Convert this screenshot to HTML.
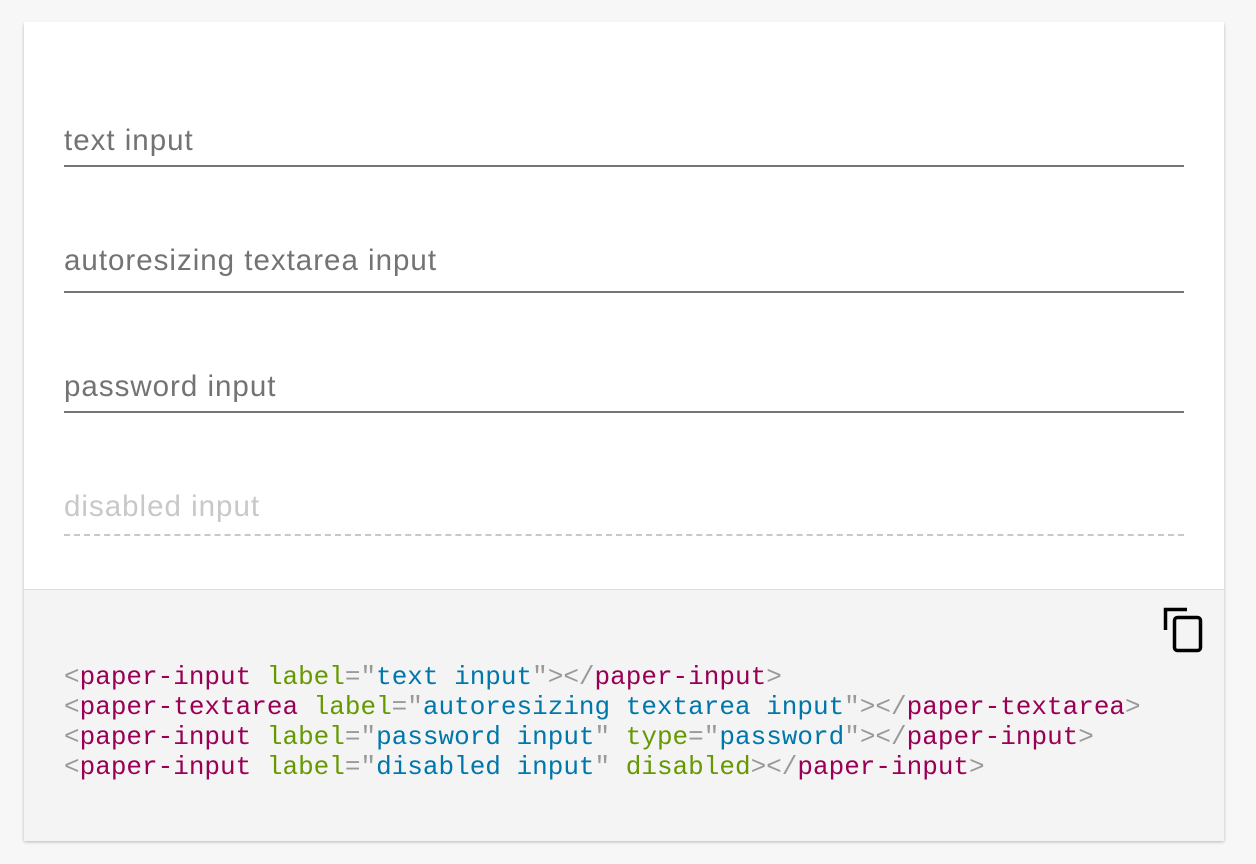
<!DOCTYPE html>
<html><head><style>
body{margin:0;background:#f7f7f7;width:1256px;height:864px;position:relative;overflow:hidden;font-family:"Liberation Sans",sans-serif}
.card{position:absolute;left:24px;top:22px;width:1200px;height:818px;background:#fff;box-shadow:0 2px 3px rgba(0,0,0,.25)}
.lbl{position:absolute;left:40px;font-size:29.5px;letter-spacing:1px;color:#737373;line-height:32px}
.ln{position:absolute;left:40px;width:1120px;height:0;border-top:2px solid #757575}
.code{position:absolute;left:0;top:567px;width:1200px;height:251px;background:#f4f4f4;border-top:1px solid #ddd}
pre{position:absolute;left:40px;top:72px;margin:0;font-family:"Liberation Mono",monospace;font-size:26px;line-height:30px;color:#999}
.t{color:#990055}.a{color:#669900}.v{color:#0077aa}
</style></head><body>
<div class="card">
<div class="lbl" style="top:103px">text input</div><div class="ln" style="top:143px"></div>
<div class="lbl" style="top:223px">autoresizing textarea input</div><div class="ln" style="top:269px"></div>
<div class="lbl" style="top:349px">password input</div><div class="ln" style="top:389px"></div>
<div class="lbl" style="top:469px;color:#c8c8c8">disabled input</div><div class="ln" style="top:512px;border-top:2px dashed #c8c8c8"></div>
<div class="code">
<svg style="position:absolute;left:1138px;top:16px" width="44" height="50" viewBox="0 0 44 50"><path d="M3.5 24V3.5H25" fill="none" stroke="#000" stroke-width="3.5"/><rect x="12.5" y="11.5" width="26" height="33" rx="3" fill="none" stroke="#000" stroke-width="3.5"/></svg>
<pre>&lt;<span class="t">paper-input</span> <span class="a">label</span>="<span class="v">text input</span>"&gt;&lt;/<span class="t">paper-input</span>&gt;
&lt;<span class="t">paper-textarea</span> <span class="a">label</span>="<span class="v">autoresizing textarea input</span>"&gt;&lt;/<span class="t">paper-textarea</span>&gt;
&lt;<span class="t">paper-input</span> <span class="a">label</span>="<span class="v">password input</span>" <span class="a">type</span>="<span class="v">password</span>"&gt;&lt;/<span class="t">paper-input</span>&gt;
&lt;<span class="t">paper-input</span> <span class="a">label</span>="<span class="v">disabled input</span>" <span class="a">disabled</span>&gt;&lt;/<span class="t">paper-input</span>&gt;</pre>
</div>
</div>
</body></html>
